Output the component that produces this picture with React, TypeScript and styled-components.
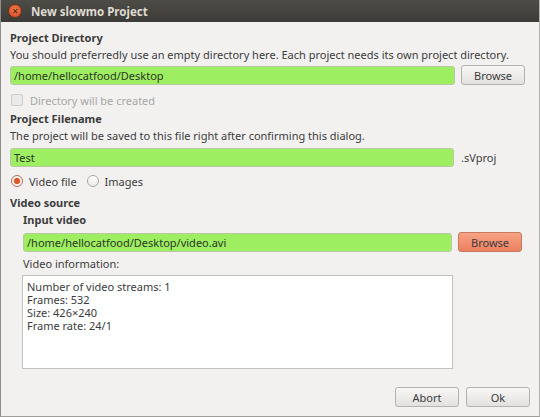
import React from 'react';
import styled, {createGlobalStyle} from 'styled-components';

const GlobalStyle = createGlobalStyle`
  html, body {
    margin: 0;
    padding: 0;
    background: #f2f1f0;
  }
  body {
    font-family: 'Noto Sans', 'DejaVu Sans', sans-serif;
    font-size: 11px;
    color: #3c3c3c;
  }
`;

const Window = styled.div`
  width: 540px;
  height: 417px;
  box-sizing: border-box;
  display: flex;
  flex-direction: column;
  background: #f2f1f0;
  border-left: 1px solid #8f8d88;
  border-right: 1px solid #b5b3ae;
  border-bottom: 1px solid #a09e99;
  overflow: hidden;
`;

const TitleBar = styled.div`
  height: 22px;
  flex: 0 0 22px;
  display: flex;
  align-items: center;
  gap: 9px;
  padding-left: 7px;
  background: linear-gradient(#4d4c47, #3c3b37);
  color: #dfdbd2;
  font-weight: bold;
  font-size: 11.5px;
`;

const CloseButton = styled.div`
  width: 12px;
  height: 12px;
  border-radius: 50%;
  background: radial-gradient(circle at 50% 40%, #f27d4c, #d2471f);
  border: 1px solid #6e3020;
  display: flex;
  align-items: center;
  justify-content: center;
  color: #4a1f12;
  font-size: 8px;
  line-height: 1;
`;

const Body = styled.div`
  flex: 1;
  display: flex;
  flex-direction: column;
  padding: 7px 9px 9px 9px;
`;

const Heading = styled.div<{indent?: boolean; top?: number}>`
  font-weight: bold;
  height: 17px;
  line-height: 17px;
  margin-top: ${(p) => p.top ?? 0}px;
  margin-left: ${(p) => (p.indent ? '13px' : '0')};
`;

const Text = styled.div<{indent?: boolean; top?: number}>`
  height: 18px;
  line-height: 18px;
  margin-top: ${(p) => p.top ?? 0}px;
  margin-left: ${(p) => (p.indent ? '13px' : '0')};
  white-space: nowrap;
`;

const Row = styled.div<{indent?: boolean; top: number}>`
  display: flex;
  align-items: center;
  gap: 6px;
  margin-top: ${(p) => p.top}px;
  margin-left: ${(p) => (p.indent ? '13px' : '0')};
`;

const Input = styled.div<{width: number}>`
  width: ${(p) => p.width}px;
  height: 19px;
  box-sizing: border-box;
  border: 1px solid #b9c8a0;
  border-radius: 3px;
  background: #9def61;
  padding: 0 3px;
  line-height: 17px;
  color: #2e3527;
`;

const Button = styled.button<{accent?: boolean}>`
  width: 64px;
  height: 20px;
  box-sizing: border-box;
  border: 1px solid ${(p) => (p.accent ? '#c77a5e' : '#b4b2ae')};
  border-radius: 3px;
  background: ${(p) =>
    p.accent
      ? 'linear-gradient(#f6a384, #ec8060)'
      : 'linear-gradient(#f8f7f6, #e2e1de)'};
  font-family: inherit;
  font-size: 11px;
  color: #3c3c3c;
  padding: 0;
`;

const CheckRow = styled.label`
  display: flex;
  align-items: center;
  gap: 7px;
  height: 20px;
  margin-top: 5px;
  margin-left: 1px;
  color: #a8a7a4;
`;

const CheckBox = styled.span`
  width: 10px;
  height: 10px;
  border: 1px solid #cfcdc9;
  border-radius: 2px;
  background: #ebeae8;
`;

const RadioGroup = styled.div`
  display: flex;
  align-items: center;
  height: 20px;
  margin-top: 4px;
  margin-left: 1px;
`;

const RadioItem = styled.label`
  display: flex;
  align-items: center;
  gap: 6px;
  margin-right: 10px;
`;

const Radio = styled.span<{checked?: boolean}>`
  width: 12px;
  height: 12px;
  box-sizing: border-box;
  border-radius: 50%;
  border: 1px solid ${(p) => (p.checked ? '#b86a52' : '#a9a7a3')};
  background: ${(p) =>
    p.checked
      ? 'radial-gradient(circle, #e0582a 0 2.8px, #f6f5f4 3.4px)'
      : 'linear-gradient(#ffffff, #eceae7)'};
`;

const InfoBox = styled.div`
  width: 431px;
  height: 94px;
  box-sizing: border-box;
  margin: 2px 0 0 12px;
  border: 1px solid #c3c1bd;
  background: #ffffff;
  padding: 4px 4px;
`;

const InfoLine = styled.div`
  height: 13px;
  line-height: 13px;
  white-space: nowrap;
`;

const Footer = styled.div`
  margin-top: auto;
  display: flex;
  justify-content: flex-end;
  gap: 7px;
`;

const Suffix = styled.span`
  margin-left: 1px;
`;

const videoInfo = [
  'Number of video streams: 1',
  'Frames: 532',
  'Size: 426×240',
  'Frame rate: 24/1',
];

export default function App() {
  return (
    <>
      <GlobalStyle />
      <Window>
        <TitleBar>
          <CloseButton>✕</CloseButton>
          New slowmo Project
        </TitleBar>
        <Body>
          <Heading>Project Directory</Heading>
          <Text>
            You should preferredly use an empty directory here. Each project
            needs its own project directory.
          </Text>
          <Row top={1}>
            <Input width={445}>/home/hellocatfood/Desktop</Input>
            <Button>Browse</Button>
          </Row>
          <CheckRow>
            <CheckBox />
            Directory will be created
          </CheckRow>
          <Heading>Project Filename</Heading>
          <Text>
            The project will be saved to this file right after confirming this
            dialog.
          </Text>
          <Row top={3}>
            <Input width={444}>Test</Input>
            <Suffix>.sVproj</Suffix>
          </Row>
          <RadioGroup>
            <RadioItem>
              <Radio checked />
              Video file
            </RadioItem>
            <RadioItem>
              <Radio />
              Images
            </RadioItem>
          </RadioGroup>
          <Heading top={3}>Video source</Heading>
          <Heading indent>Input video</Heading>
          <Row indent top={4}>
            <Input width={429}>/home/hellocatfood/Desktop/video.avi</Input>
            <Button accent>Browse</Button>
          </Row>
          <Text indent top={3}>
            Video information:
          </Text>
          <InfoBox>
            {videoInfo.map((line) => (
              <InfoLine key={line}>{line}</InfoLine>
            ))}
          </InfoBox>
          <Footer>
            <Button>Abort</Button>
            <Button>Ok</Button>
          </Footer>
        </Body>
      </Window>
    </>
  );
}
